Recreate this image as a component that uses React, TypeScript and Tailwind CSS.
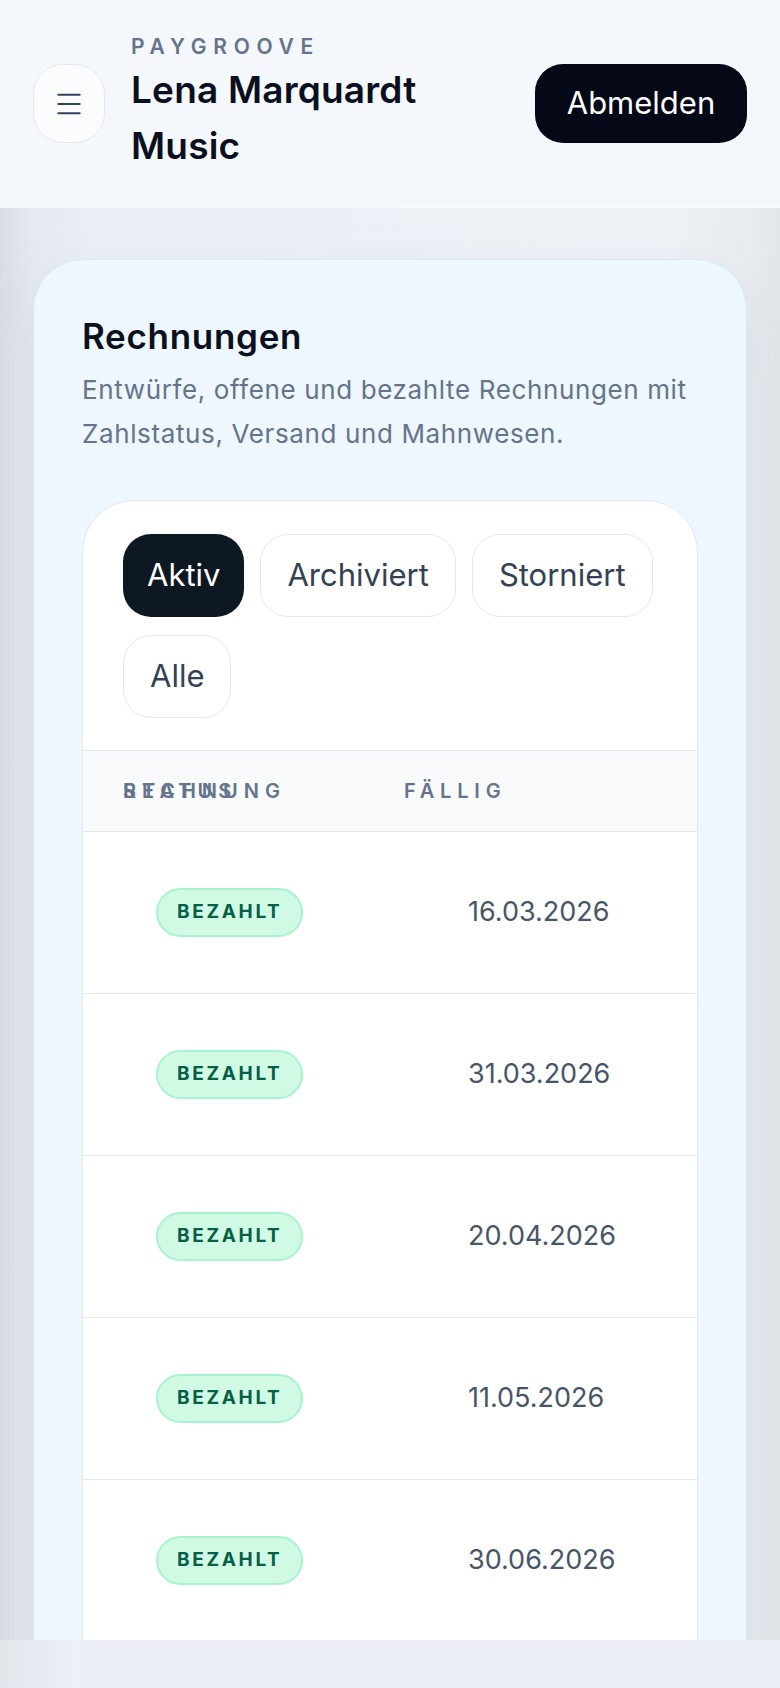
import { Menu } from "lucide-react"

const invoices = [
  { status: "BEZAHLT", due: "16.03.2026" },
  { status: "BEZAHLT", due: "31.03.2026" },
  { status: "BEZAHLT", due: "20.04.2026" },
  { status: "BEZAHLT", due: "11.05.2026" },
  { status: "BEZAHLT", due: "30.06.2026" },
]

const tabs = ["Aktiv", "Archiviert", "Storniert", "Alle"]

export default function App() {
  return (
    <div
      className="flex h-[1688px] flex-col overflow-hidden bg-[linear-gradient(90deg,#d9dde3_0%,#e5e9ef_4%,#ebeff5_12%,#eef1f6_85%,#e8ebef_96%,#e2e5e9_100%)]"
      style={{ fontFamily: "Inter, 'Noto Sans', sans-serif" }}
    >
      <header className="flex items-center justify-between border-b border-white/80 bg-[#f4f7fb] px-[33px] py-[33px]">
        <div className="flex items-center gap-[26px]">
          <button className="flex h-[79px] w-[72px] items-center justify-center rounded-[30px] border border-[#e2e8f0] bg-[#fafcfe] text-[#334155]">
            <Menu size={32} strokeWidth={1.5} />
          </button>
          <div className="flex flex-col">
            <span className="text-[21px] leading-[28px] font-semibold tracking-[0.32em] text-[#64748b]">PAYGROOVE</span>
            <h1 className="mt-px w-[300px] text-[37px] leading-[56px] font-semibold tracking-[0.005em] text-[#0b1020]">
              Lena Marquardt Music
            </h1>
          </div>
        </div>
        <button className="flex h-[79px] w-[212px] items-center justify-center rounded-[28px] bg-[#050816] text-[31px] text-white">
          Abmelden
        </button>
      </header>

      <main className="flex-1 overflow-hidden px-[33px] pt-[51px]">
        <section className="min-h-[1500px] rounded-[50px] border border-[#d9e9f8] bg-[#eef6fe] px-[48px] pt-[54px] shadow-[0_24px_60px_rgba(148,163,184,0.18)]">
          <h2 className="text-[35px] leading-[44px] font-semibold tracking-[0.02em] text-[#0b1020]">Rechnungen</h2>
          <p className="mt-[10px] text-[26px] leading-[44px] tracking-[0.024em] text-[#64748b]">
            Entwürfe, offene und bezahlte Rechnungen mit Zahlstatus, Versand und Mahnwesen.
          </p>

          <div className="mt-[44px] overflow-hidden rounded-t-[52px] border border-[#e2e8f0] bg-white">
            <div className="flex flex-wrap gap-x-4 gap-y-[18px] pt-[33px] pr-6 pb-[32px] pl-10">
              {tabs.map((t, i) => (
                <button
                  key={t}
                  className={
                    i === 0
                      ? "h-[83px] rounded-[28px] bg-[#0d1823] px-[24px] text-[31px] text-white"
                      : "h-[83px] rounded-[28px] border border-[#e2e8f0] bg-white px-[26px] text-[31px] text-[#334155]"
                  }
                >
                  {t}
                </button>
              ))}
            </div>

            <div className="flex h-[82px] items-center border-y border-[#e2e8f0] bg-[#f8fafc] pl-10 text-[20px] font-semibold tracking-[0.3em] text-[#64748b]">
              <div className="grid w-[281px]">
                <span className="col-start-1 row-start-1">RECHNUNG</span>
                <span className="col-start-1 row-start-1">STATUS</span>
              </div>
              <span className="tracking-[0.29em]">FÄLLIG</span>
            </div>

            {invoices.map((inv) => (
              <div
                key={inv.due}
                className="grid h-[162px] grid-cols-[312px_1fr] items-center border-b border-[#e2e8f0] pl-[73px]"
              >
                <div>
                  <span className="inline-flex h-[49px] items-center rounded-full border-2 border-[#a7f3d0] bg-[#d1fae5] px-[19px] text-[19px] font-bold tracking-[0.14em] text-[#065f46]">
                    {inv.status}
                  </span>
                </div>
                <span className="text-[27px] text-[#475569]">{inv.due}</span>
              </div>
            ))}
          </div>
        </section>
      </main>

      <div className="h-[48px] shrink-0 bg-[linear-gradient(90deg,#e2e5ea_0%,#eceff6_10%,#eceff6_100%)]" />
    </div>
  )
}
